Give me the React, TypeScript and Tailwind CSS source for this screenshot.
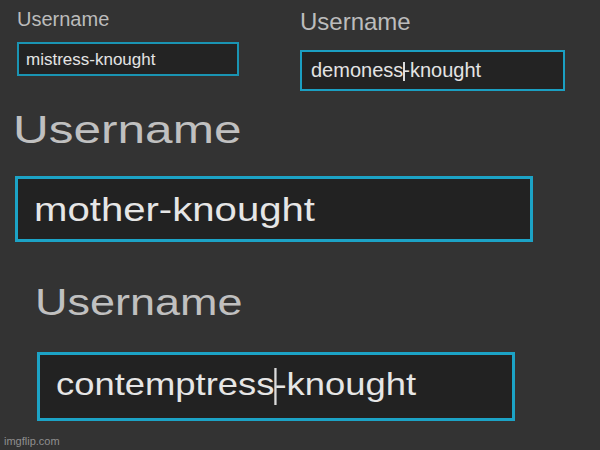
const font = "font-['Liberation_Sans',Arial,sans-serif]"

function Caret({ className }: { className: string }) {
  // text caret, drawn over the hyphen without pushing the text
  return <span className={`inline-block align-middle bg-[#dcdcdc] ${className}`} />
}

export default function App() {
  return (
    <div className={`relative w-[600px] h-[450px] overflow-hidden bg-[#333333] ${font}`}>
      {/* Top row: two small captures */}
      <div className="flex items-start pt-[9px]">
        <div className="ml-[17px] flex flex-col">
          <div className="text-[20px] leading-none text-[#bcbcbc]">Username</div>
          <div className="mt-[13px] flex h-[34px] w-[222px] items-center border-2 border-[#1a94b3] bg-[#232323] pl-[7px]">
            <span className="text-[17px] leading-none text-[#e4e4e4]">mistress-knought</span>
          </div>
        </div>
        <div className="ml-[61px] mt-[1px] flex flex-col">
          <div className="text-[24px] leading-none text-[#bcbcbc]">Username</div>
          <div className="mt-[16px] flex h-[41px] w-[265px] items-center border-2 border-[#1b9fc2] bg-[#232323] pl-[9px]">
            <span className="text-[20px] leading-none text-[#e4e4e4] whitespace-nowrap">
              demoness
              <Caret className="w-[1.5px] h-[19px] -mr-[1.5px]" />
              -knought
            </span>
          </div>
        </div>
      </div>

      {/* Large capture */}
      <div className="mt-[19px] flex flex-col">
        <div className="ml-[13px] origin-left scale-x-[1.27] text-[39px] leading-none text-[#c0c0c0]">Username</div>
        <div className="ml-[15px] mt-[27px] flex h-[66px] w-[518px] items-center border-[3px] border-[#1ca3c6] bg-[#222222] pl-[16px]">
          <span className="inline-block origin-left scale-x-[1.18] text-[34px] leading-none text-[#e6e6e6]">mother-knought</span>
        </div>
      </div>

      {/* Bottom capture */}
      <div className="mt-[43px] flex flex-col">
        <div className="ml-[35px] origin-left scale-x-[1.25] text-[36px] leading-none text-[#c0c0c0]">Username</div>
        <div className="ml-[37px] mt-[31px] flex h-[69px] w-[478px] items-center border-[3px] border-[#1ca3c6] bg-[#222222] pl-[16px]">
          <span className="inline-block origin-left scale-x-[1.137] text-[32px] leading-none text-[#e6e6e6] whitespace-nowrap">
            contemptress
            <Caret className="w-[2px] h-[37px] -mr-[2px]" />
            -knought
          </span>
        </div>
      </div>

      {/* watermark */}
      <div className="absolute left-[4px] bottom-[3px] text-[11px] leading-none text-[#8f8f8f]">imgflip.com</div>
    </div>
  )
}
